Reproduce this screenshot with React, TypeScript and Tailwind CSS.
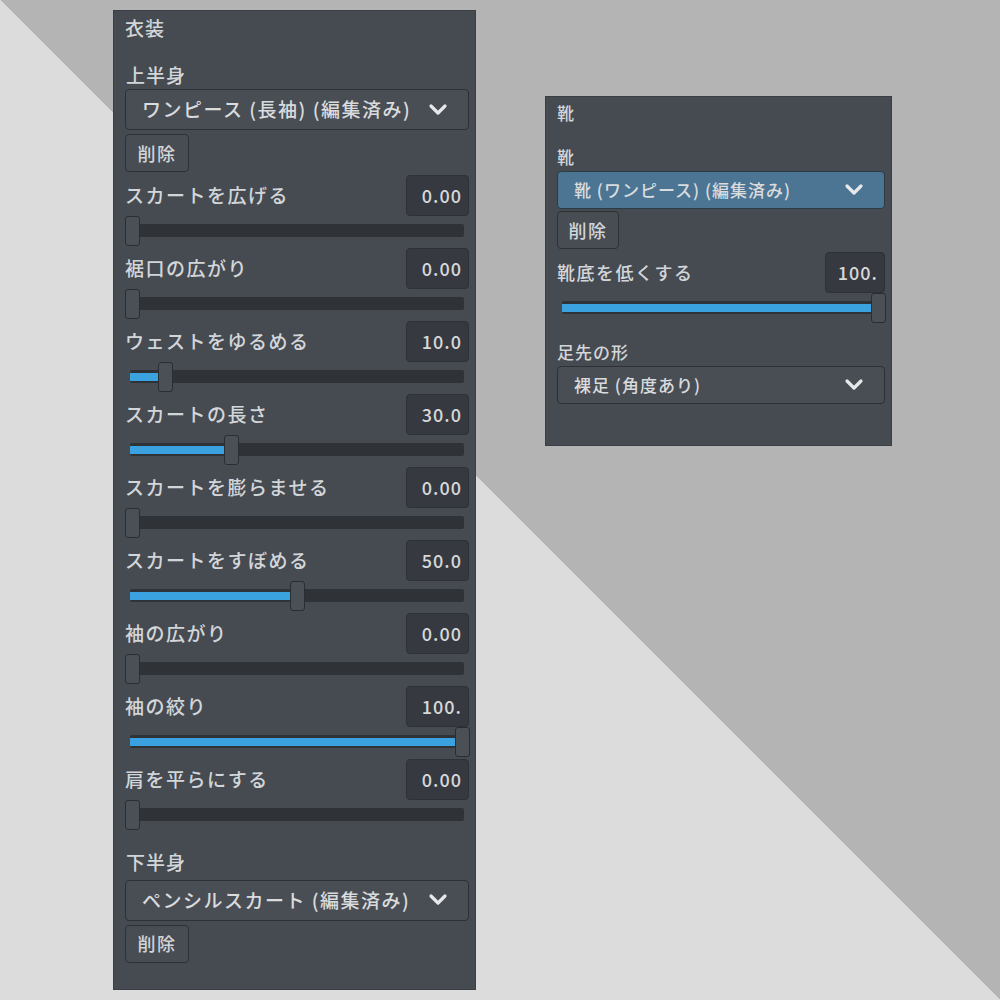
const font = { fontFamily: '"Noto Sans CJK JP", "Noto Sans", sans-serif' };

const upperSliders: [string, string, number][] = [
  ["スカートを広げる", "0.00", 0],
  ["裾口の広がり", "0.00", 0],
  ["ウェストをゆるめる", "10.0", 10],
  ["スカートの長さ", "30.0", 30],
  ["スカートを膨らませる", "0.00", 0],
  ["スカートをすぼめる", "50.0", 50],
  ["袖の広がり", "0.00", 0],
  ["袖の絞り", "100.", 100],
  ["肩を平らにする", "0.00", 0],
];

function Chevron() {
  return (
    <svg width="20" height="14" viewBox="0 0 20 14" className="shrink-0">
      <polyline
        points="3,3 10,10 17,3"
        fill="none"
        stroke="#e6e8ea"
        strokeWidth="3.2"
        strokeLinecap="round"
        strokeLinejoin="round"
      />
    </svg>
  );
}

function Dropdown({
  label,
  active = false,
  h = 40,
  small = false,
}: {
  label: string;
  active?: boolean;
  h?: number;
  small?: boolean;
}) {
  return (
    <div
      className={`flex items-center justify-between rounded-[4px] border pl-[16px] pr-[20px] ${
        active ? "border-[#2c3a46] bg-[#4c7593]" : "border-[#2d3136] bg-[#494e55]"
      }`}
      style={{ height: h }}
    >
      <span
        className={`whitespace-nowrap font-medium text-[#d9dbdd] ${
          small ? "text-[17px] tracking-[1px]" : "text-[19px] tracking-[1.5px]"
        }`}
      >
        {label}
      </span>
      <Chevron />
    </div>
  );
}

function DeleteButton({ w = 64 }: { w?: number }) {
  return (
    <div
      className="flex h-[38px] items-center justify-center rounded-[4px] border border-[#2d3136] bg-[#484d54] text-[18px] font-medium tracking-[1.5px] text-[#d2d5d8]"
      style={{ width: w }}
    >
      削除
    </div>
  );
}

function Slider({ value, width }: { value: number; width: number }) {
  const thumbLeft = (value / 100) * (width - 15);
  return (
    <div className="relative h-[31px]" style={{ width }}>
      <div className="absolute left-[5px] right-[6px] top-[8px] h-[13px] rounded-[2px] bg-[#2f3338]">
        {value > 0 && (
          <div
            className="absolute left-0 top-[3px] h-[8px] bg-[#3aa2df]"
            style={{ width: thumbLeft + 3 }}
          />
        )}
      </div>
      <div
        className="absolute top-0 h-[30px] w-[15px] rounded-[3px] border border-[#2a2d31] bg-[#4b5057]"
        style={{ left: thumbLeft }}
      />
    </div>
  );
}

function SliderRow({
  label,
  text,
  value,
  width,
  boxW,
  big = false,
}: {
  label: string;
  text: string;
  value: number;
  width: number;
  boxW: number;
  big?: boolean;
}) {
  return (
    <div className="flex flex-col">
      <div className="flex h-[42px] items-center justify-between">
        <span
          className={`whitespace-nowrap font-medium text-[#d3d6d9] ${
            big ? "text-[19px] tracking-[1.5px]" : "text-[18px] tracking-[1.5px]"
          }`}
        >
          {label}
        </span>
        <div
          className="flex h-[41px] items-center justify-end rounded-[4px] border border-[#2e3237] bg-[#363a40] pr-[6px] text-[18px] font-medium tracking-[1px] text-[#d6d8da]"
          style={{ width: boxW }}
        >
          {text}
        </div>
      </div>
      <Slider value={value} width={width} />
    </div>
  );
}

export default function App() {
  return (
    <div
      className="flex h-[1000px] w-[1000px] items-start bg-[linear-gradient(45deg,#dcdcdc_50%,#b4b4b4_50%)] pl-[113px] pt-[10px]"
      style={font}
    >
      {/* 衣装 */}
      <div className="flex h-[980px] w-[363px] flex-col border border-[#3b3f44] bg-[#464b52] pl-[11px] pr-[6px]">
        <div className="mt-[3px] text-[19px] font-medium tracking-[1px] text-[#d3d6d9]">衣装</div>
        <div className="mt-[18px] pl-[1px] text-[19px] font-medium tracking-[1px] text-[#d3d6d9]">上半身</div>
        <div className="flex flex-col gap-[4px]">
          <Dropdown label="ワンピース (長袖) (編集済み)" h={41} />
          <DeleteButton />
        </div>
        <div className="mt-[2px] flex flex-col">
          {upperSliders.map(([label, text, value]) => (
            <SliderRow key={label} label={label} text={text} value={value} width={345} boxW={63} big />
          ))}
        </div>
        <div className="mt-[17px] pl-[1px] text-[19px] font-medium tracking-[1px] text-[#d3d6d9]">下半身</div>
        <div className="mt-[3px] flex flex-col gap-[4px]">
          <Dropdown label="ペンシルスカート (編集済み)" h={41} />
          <DeleteButton />
        </div>
      </div>

      {/* 靴 */}
      <div className="ml-[69px] mt-[86px] flex h-[350px] w-[347px] flex-col border border-[#3b3f44] bg-[#464b52] pl-[11px] pr-[6px]">
        <div className="mt-[3px] text-[17px] font-medium tracking-[1px] text-[#d3d6d9]">靴</div>
        <div className="mt-[18px] text-[17px] font-medium tracking-[1px] text-[#d3d6d9]">靴</div>
        <div className="mt-[2px] flex flex-col gap-[2px]">
          <Dropdown label="靴 (ワンピース) (編集済み)" active h={38} small />
          <DeleteButton w={62} />
        </div>
        <div className="mt-[2px]">
          <SliderRow label="靴底を低くする" text="100." value={100} width={329} boxW={60} />
        </div>
        <div className="mt-[15px] text-[17px] font-medium tracking-[1px] text-[#d3d6d9]">足先の形</div>
        <div className="mt-[1px]">
          <Dropdown label="裸足 (角度あり)" h={38} small />
        </div>
      </div>
    </div>
  );
}
